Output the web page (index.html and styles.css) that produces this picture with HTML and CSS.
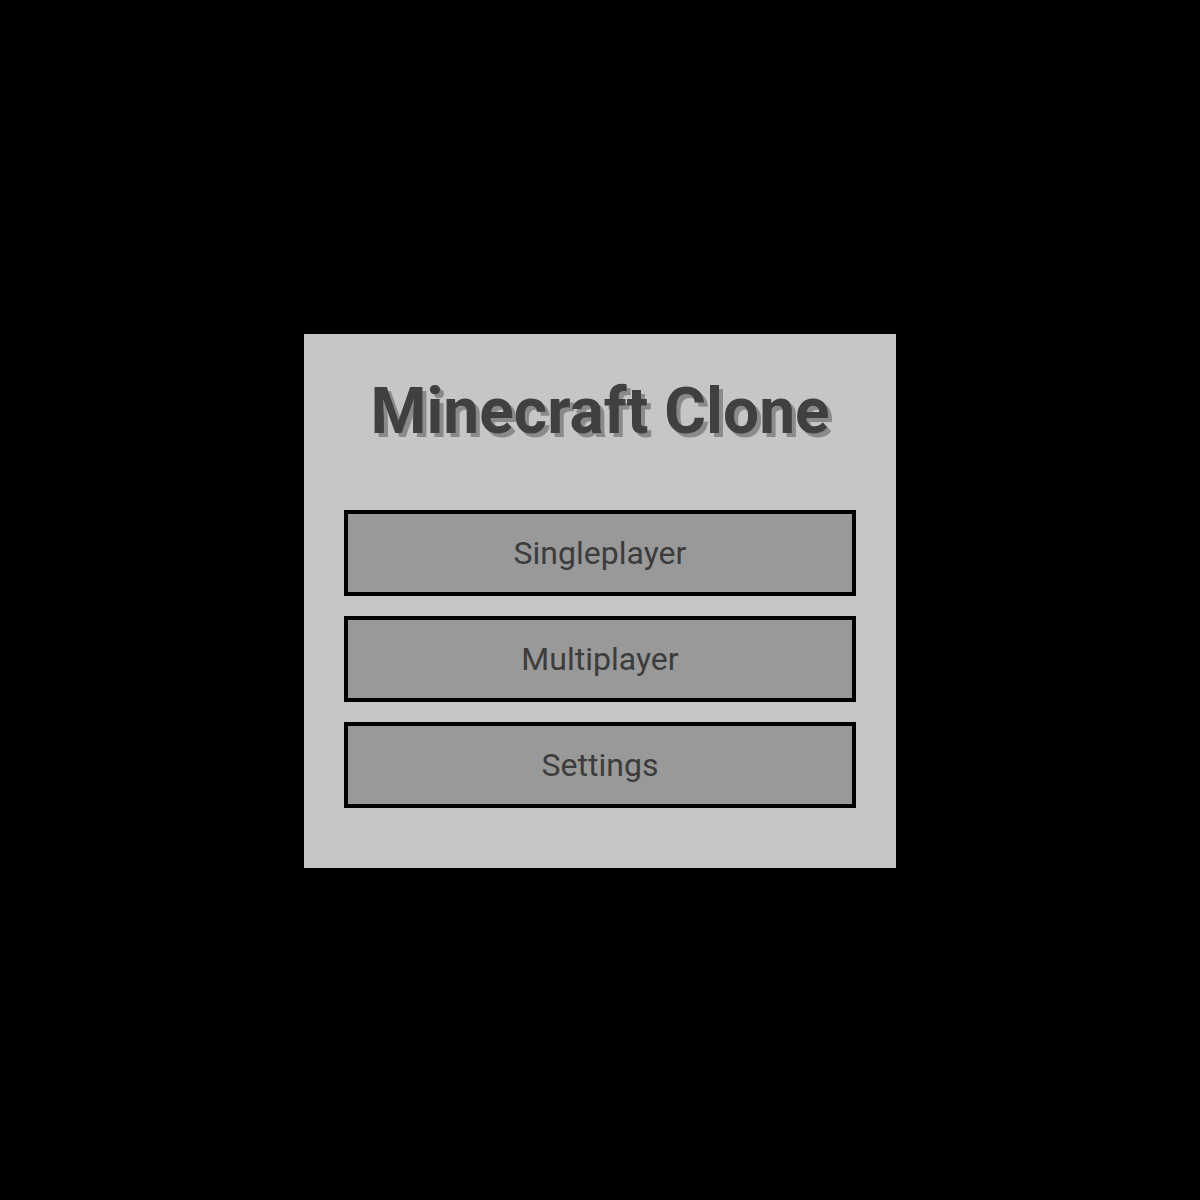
FILE: index.html
```html
<!DOCTYPE html>
<html lang="en">
<head>
<meta charset="utf-8">
<title>Minecraft Clone</title>
<link rel="stylesheet" href="styles.css">
</head>
<body>
<div class="menu">
  <h1 class="title">Minecraft Clone</h1>
  <div class="buttons">
    <button class="btn">Singleplayer</button>
    <button class="btn">Multiplayer</button>
    <button class="btn">Settings</button>
  </div>
</div>
</body>
</html>
```

FILE: styles.css
```css
html, body {
  margin: 0;
  padding: 0;
  height: 100%;
}
body {
  box-sizing: border-box;
  padding-top: 2px;
  background: #000;
  display: flex;
  align-items: center;
  justify-content: center;
  font-family: Roboto, "Liberation Sans", sans-serif;
}
.menu {
  width: 512px;
  padding: 40px 40px 60px;
  background: #c6c6c6;
  box-shadow: 0 0 10px rgba(0,0,0,0.5);
}
.title {
  margin: 0 0 61px;
  height: 75px;
  font-size: 64px;
  font-weight: 700;
  line-height: 75px;
  text-align: center;
  color: #404040;
  text-shadow: 4px 4px 0 #8a8a8a;
}
.buttons {
  display: flex;
  flex-direction: column;
  gap: 20px;
}
.btn {
  display: block;
  width: 100%;
  height: 86px;
  margin: 0;
  padding: 0;
  border: 4px solid #000;
  background: #999;
  color: #3c3c3c;
  font-family: Roboto, "Liberation Sans", sans-serif;
  font-size: 32px;
  font-weight: 400;
  text-align: center;
}
```
